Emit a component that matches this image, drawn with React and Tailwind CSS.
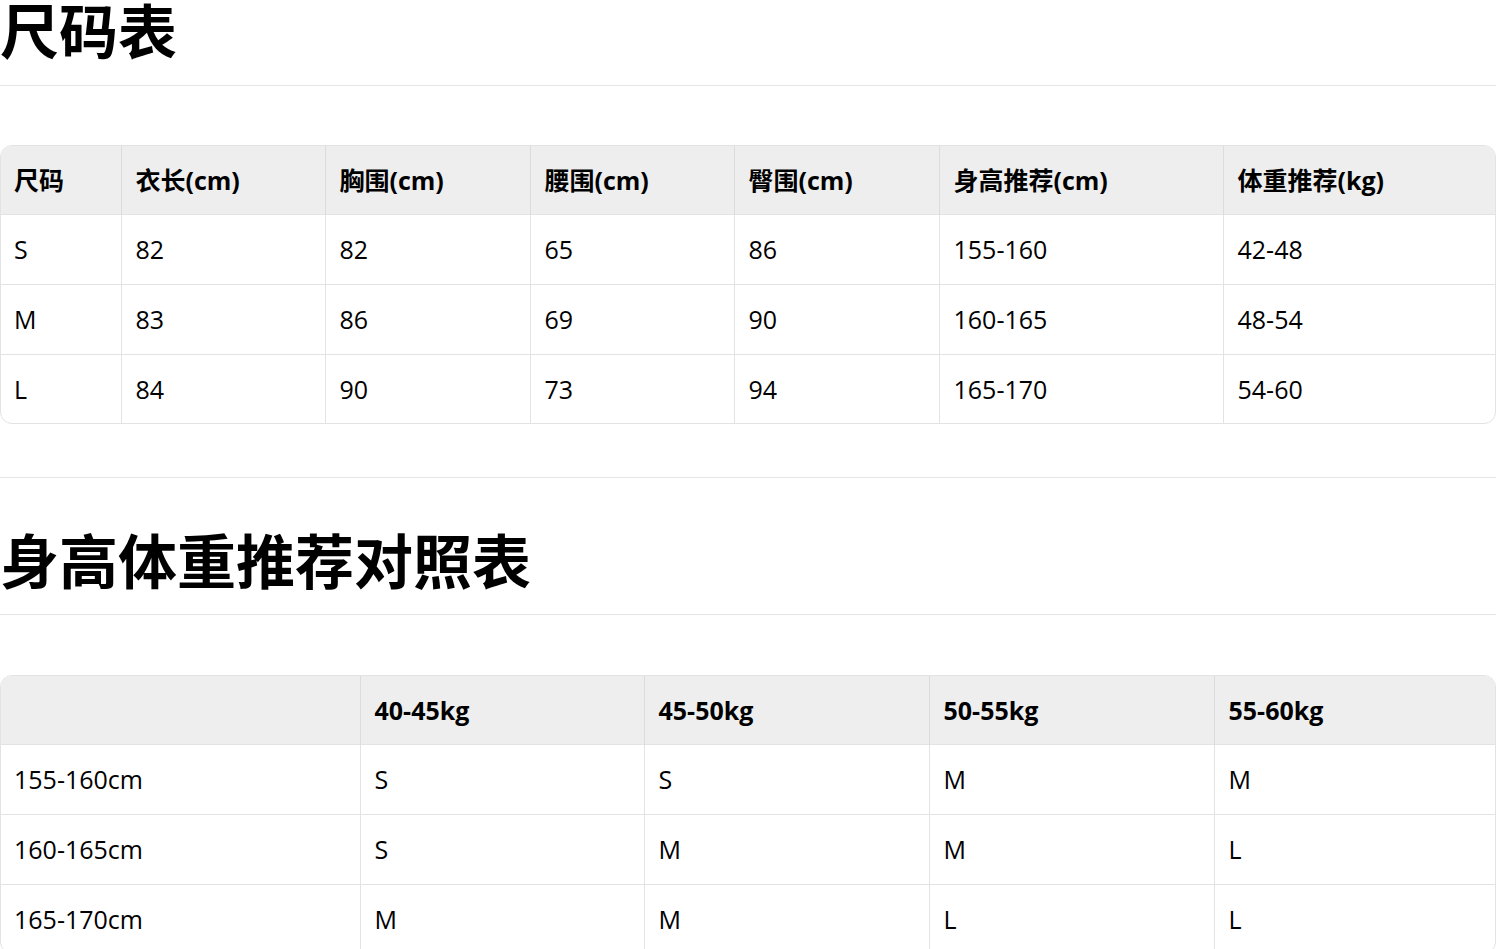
const sizeRows = [
  ['S', '82', '82', '65', '86', '155-160', '42-48'],
  ['M', '83', '86', '69', '90', '160-165', '48-54'],
  ['L', '84', '90', '73', '94', '165-170', '54-60'],
];
const sizeHead = ['尺码', '衣长(cm)', '胸围(cm)', '腰围(cm)', '臀围(cm)', '身高推荐(cm)', '体重推荐(kg)'];
const sizeCols = ['w-[120px]', 'w-[204px]', 'w-[205px]', 'w-[204px]', 'w-[205px]', 'w-[284px]', 'w-[274px]'];

const recHead = ['', '40-45kg', '45-50kg', '50-55kg', '55-60kg'];
const recRows = [
  ['155-160cm', 'S', 'S', 'M', 'M'],
  ['160-165cm', 'S', 'M', 'M', 'L'],
  ['165-170cm', 'M', 'M', 'L', 'L'],
];
const recCols = ['w-[359px]', 'w-[284px]', 'w-[285px]', 'w-[285px]', 'w-[283px]'];

function Table({ head, rows, cols }) {
  return (
    <div className="w-[1496px] overflow-hidden rounded-xl border border-[#e3e3e3]">
      <table className="w-full table-fixed border-collapse">
        <colgroup>
          {cols.map((c, i) => <col key={i} className={c} />)}
        </colgroup>
        <thead>
          <tr className="h-[68px] bg-[#eeeeee]">
            {head.map((h, i) => (
              <th key={i} className={`pr-[13px] pt-px text-left font-bold ${i > 0 ? 'pl-[14px] border-l border-[#dcdcdc]' : 'pl-[13px]'}`}>{h}</th>
            ))}
          </tr>
        </thead>
        <tbody>
          {rows.map((r, ri) => (
            <tr key={ri} className={`border-t border-[#e3e3e3] ${ri === rows.length - 1 ? 'h-[69px]' : 'h-[70px]'}`}>
              {r.map((c, i) => (
                <td key={i} className={`pr-[13px] pt-[2px] ${i > 0 ? 'pl-[14px] border-l border-[#e3e3e3]' : 'pl-[13px]'}`}>{c}</td>
              ))}
            </tr>
          ))}
        </tbody>
      </table>
    </div>
  );
}

export default function App() {
  return (
    <div className="bg-white text-black text-[25px] font-['Open_Sans','Noto_Sans_CJK_SC',sans-serif]">
      {/* 尺码表 */}
      <h1 className="h-[86px] border-b border-[#e5e5e5] pt-px text-[59px] leading-[56px] font-bold font-['Noto_Sans_CJK_SC',sans-serif]">尺码表</h1>
      <div className="mt-[59px]">
        <Table head={sizeHead} rows={sizeRows} cols={sizeCols} />
      </div>

      <hr className="mt-[53px] border-0 border-t border-[#e5e5e5]" />

      {/* 身高体重推荐 */}
      <h1 className="mt-[52px] h-[85px] border-b border-[#e5e5e5] pt-px text-[59px] leading-[56px] font-bold font-['Noto_Sans_CJK_SC',sans-serif]">身高体重推荐对照表</h1>
      <div className="mt-[60px]">
        <Table head={recHead} rows={recRows} cols={recCols} />
      </div>
    </div>
  );
}
